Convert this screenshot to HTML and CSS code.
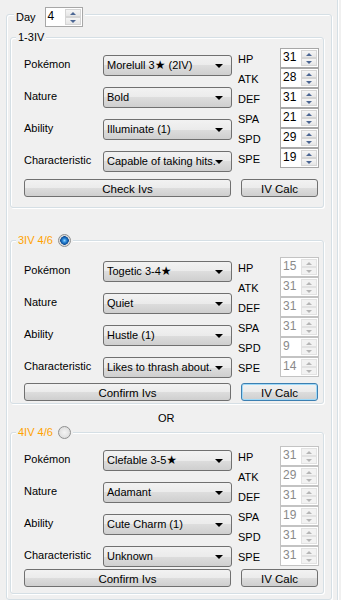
FILE: index.html
```html
<!DOCTYPE html>
<html lang="en">
<head>
  <meta charset="UTF-8" />
  <meta name="viewport" content="width=device-width, initial-scale=1.0" />
  <title>IV Checker</title>
  <link rel="stylesheet" href="styles.css">
</head>
<body>

<div class="window">
  <div class="group day-group">
    <div class="day-title">
      <span>Day</span>
      <div class="spin day-spin">
        <span class="spin-val">4</span>
        <span class="spin-btns"><i class="up"></i><i class="down"></i></span>
      </div>
    </div>

    <!-- 1-3IV -->
    <div class="group iv-group g1">
      <div class="group-title">1-3IV</div>
      <div class="iv-body">
        <div class="fields">
          <div class="field"><span class="lbl">Pokémon</span><div class="combo">Morelull 3<b class="star">★</b> (2IV)</div></div>
          <div class="field"><span class="lbl">Nature</span><div class="combo">Bold</div></div>
          <div class="field"><span class="lbl">Ability</span><div class="combo">Illuminate (1)</div></div>
          <div class="field"><span class="lbl">Characteristic</span><div class="combo">Capable of taking hits.</div></div>
        </div>
        <div class="stats">
          <div class="stat"><span class="lbl">HP</span><div class="spin"><span class="spin-val">31</span><span class="spin-btns"><i class="up"></i><i class="down"></i></span></div></div>
          <div class="stat"><span class="lbl">ATK</span><div class="spin"><span class="spin-val">28</span><span class="spin-btns"><i class="up"></i><i class="down"></i></span></div></div>
          <div class="stat"><span class="lbl">DEF</span><div class="spin"><span class="spin-val">31</span><span class="spin-btns"><i class="up"></i><i class="down"></i></span></div></div>
          <div class="stat"><span class="lbl">SPA</span><div class="spin"><span class="spin-val">21</span><span class="spin-btns"><i class="up"></i><i class="down"></i></span></div></div>
          <div class="stat"><span class="lbl">SPD</span><div class="spin"><span class="spin-val">29</span><span class="spin-btns"><i class="up"></i><i class="down"></i></span></div></div>
          <div class="stat"><span class="lbl">SPE</span><div class="spin"><span class="spin-val">19</span><span class="spin-btns"><i class="up"></i><i class="down"></i></span></div></div>
        </div>
      </div>
      <div class="buttons">
        <button class="btn wide">Check Ivs</button>
        <button class="btn calc">IV Calc</button>
      </div>
    </div>

    <!-- 3IV 4/6 -->
    <div class="group iv-group g2">
      <div class="group-title orange">3IV 4/6 <span class="radio checked"></span></div>
      <div class="iv-body">
        <div class="fields">
          <div class="field"><span class="lbl">Pokémon</span><div class="combo">Togetic 3-4<b class="star">★</b></div></div>
          <div class="field"><span class="lbl">Nature</span><div class="combo">Quiet</div></div>
          <div class="field"><span class="lbl">Ability</span><div class="combo">Hustle (1)</div></div>
          <div class="field"><span class="lbl">Characteristic</span><div class="combo">Likes to thrash about.</div></div>
        </div>
        <div class="stats">
          <div class="stat"><span class="lbl">HP</span><div class="spin off"><span class="spin-val">15</span><span class="spin-btns"><i class="up"></i><i class="down"></i></span></div></div>
          <div class="stat"><span class="lbl">ATK</span><div class="spin off"><span class="spin-val">31</span><span class="spin-btns"><i class="up"></i><i class="down"></i></span></div></div>
          <div class="stat"><span class="lbl">DEF</span><div class="spin off"><span class="spin-val">31</span><span class="spin-btns"><i class="up"></i><i class="down"></i></span></div></div>
          <div class="stat"><span class="lbl">SPA</span><div class="spin off"><span class="spin-val">31</span><span class="spin-btns"><i class="up"></i><i class="down"></i></span></div></div>
          <div class="stat"><span class="lbl">SPD</span><div class="spin off"><span class="spin-val">9</span><span class="spin-btns"><i class="up"></i><i class="down"></i></span></div></div>
          <div class="stat"><span class="lbl">SPE</span><div class="spin off"><span class="spin-val">14</span><span class="spin-btns"><i class="up"></i><i class="down"></i></span></div></div>
        </div>
      </div>
      <div class="buttons">
        <button class="btn wide">Confirm Ivs</button>
        <button class="btn calc focus">IV Calc</button>
      </div>
    </div>

    <div class="or">OR</div>

    <!-- 4IV 4/6 -->
    <div class="group iv-group g3">
      <div class="group-title orange">4IV 4/6 <span class="radio"></span></div>
      <div class="iv-body">
        <div class="fields">
          <div class="field"><span class="lbl">Pokémon</span><div class="combo">Clefable 3-5<b class="star">★</b></div></div>
          <div class="field"><span class="lbl">Nature</span><div class="combo">Adamant</div></div>
          <div class="field"><span class="lbl">Ability</span><div class="combo">Cute Charm (1)</div></div>
          <div class="field"><span class="lbl">Characteristic</span><div class="combo">Unknown</div></div>
        </div>
        <div class="stats">
          <div class="stat"><span class="lbl">HP</span><div class="spin off"><span class="spin-val">31</span><span class="spin-btns"><i class="up"></i><i class="down"></i></span></div></div>
          <div class="stat"><span class="lbl">ATK</span><div class="spin off"><span class="spin-val">29</span><span class="spin-btns"><i class="up"></i><i class="down"></i></span></div></div>
          <div class="stat"><span class="lbl">DEF</span><div class="spin off"><span class="spin-val">31</span><span class="spin-btns"><i class="up"></i><i class="down"></i></span></div></div>
          <div class="stat"><span class="lbl">SPA</span><div class="spin off"><span class="spin-val">19</span><span class="spin-btns"><i class="up"></i><i class="down"></i></span></div></div>
          <div class="stat"><span class="lbl">SPD</span><div class="spin off"><span class="spin-val">31</span><span class="spin-btns"><i class="up"></i><i class="down"></i></span></div></div>
          <div class="stat"><span class="lbl">SPE</span><div class="spin off"><span class="spin-val">31</span><span class="spin-btns"><i class="up"></i><i class="down"></i></span></div></div>
        </div>
      </div>
      <div class="buttons">
        <button class="btn wide">Confirm Ivs</button>
        <button class="btn calc">IV Calc</button>
      </div>
    </div>
  </div>
</div>

</body>
</html>
```

FILE: styles.css
```css
body {
  margin: 0;
  background: #f0f0f0;
  color: #000;
  font-family: 'Liberation Sans', Arial, sans-serif;
  font-size: 11px;
  line-height: 13px;
}
.window {
  width: 338px;
  height: 600px;
  padding: 14px 0 0 6px;
  box-sizing: border-box;
  border-right: 1px solid #d5dfe5;
  box-shadow: 1px 0 0 #fff;
}

/* Group boxes */
.group {
  position: relative;
  border: 1px solid #d5dfe5;
  border-radius: 3px;
  box-shadow: inset 1px 1px 0 #fff, 1px 1px 0 #fff;
}
.day-group {
  width: 326px;
  box-sizing: border-box;
  padding: 0 0 5px 3px;
}
.day-title {
  position: absolute;
  top: -8px;
  left: 7px;
  display: flex;
  align-items: center;
  gap: 9px;
  padding: 0 2px;
  background: #f0f0f0;
}
.group-title {
  position: absolute;
  top: -8px;
  left: 5px;
  display: flex;
  align-items: center;
  gap: 5px;
  padding: 0 2px;
  line-height: 14px;
  background: #f0f0f0;
}
.group-title.orange {
  color: #ffa200;
}
.iv-group {
  width: 314px;
  box-sizing: border-box;
  padding: 0 4px 0 13px;
}
.g1 { margin-top: 22px; padding-bottom: 10px; }
.g2 { margin-top: 32px; padding-bottom: 2px; }
.g3 { padding-bottom: 6px; }

.or {
  height: 28px;
  line-height: 28px;
  padding-left: 148px;
}

/* Radio */
.radio {
  display: inline-block;
  width: 11px;
  height: 11px;
  border: 1px solid #8e8f8f;
  border-radius: 50%;
  background: radial-gradient(circle, #f4f4f4 0, #d6d6d6 100%);
}
.radio.checked {
  background: radial-gradient(circle, #8fd3ff 0, #2b86d6 2px, #0c4c95 4px, #d6d6d6 4.5px, #f4f4f4 100%);
}

/* Fields */
.iv-body {
  display: flex;
  align-items: flex-start;
}
.fields {
  display: flex;
  flex-direction: column;
  gap: 11px;
  width: 208px;
}
.g1 .fields { margin-top: 17px; }
.g2 .fields { margin-top: 20px; }
.g3 .fields { margin-top: 17px; }
.field {
  display: flex;
  align-items: center;
  height: 21px;
}
.field .lbl {
  width: 79px;
  margin-top: -2px;
}
.combo {
  position: relative;
  width: 129px;
  height: 21px;
  box-sizing: border-box;
  padding: 3px 0 0 3px;
  border: 1px solid #707070;
  border-radius: 3px;
  background: linear-gradient(#f2f2f2, #ebebeb 50%, #dddddd 50%, #cfcfcf);
  white-space: nowrap;
  overflow: hidden;
}
.combo::after {
  content: '';
  position: absolute;
  right: 8px;
  top: 8px;
  border-left: 4px solid transparent;
  border-right: 4px solid transparent;
  border-top: 4px solid #000;
}
.star {
  font-family: 'DejaVu Sans', sans-serif;
  font-weight: bold;
  font-size: 12px;
}

/* Stats */
.stats {
  margin-left: 6px;
}
.g1 .stats { margin-top: 10px; }
.g2 .stats { margin-top: 16px; }
.g3 .stats { margin-top: 13px; }
.stat {
  display: flex;
  align-items: center;
  height: 20px;
}
.stat .lbl {
  width: 42px;
  padding-top: 2px;
}
.spin {
  display: flex;
  width: 39px;
  height: 20px;
  box-sizing: border-box;
  border: 1px solid #a7a7a7;
  background: #fff;
}
.spin-val {
  flex: 1;
  padding: 2px 0 0 2px;
  font-size: 12px;
}
.spin-btns {
  display: flex;
  flex-direction: column;
  width: 16px;
  margin: 1px;
}
.spin-btns i {
  flex: 1;
  display: flex;
  align-items: center;
  justify-content: center;
  border: 1px solid #d5d5d5;
  background: linear-gradient(#f5f5f5, #e6e6e6);
}
.spin-btns i::before {
  content: '';
  border-left: 3px solid transparent;
  border-right: 3px solid transparent;
}
.spin-btns .up::before { border-bottom: 3px solid #4c6794; }
.spin-btns .down::before { border-top: 3px solid #4c6794; }
.spin.off { border-color: #c3c3c3; }
.spin.off .spin-val { color: #8a8a8a; }
.spin.off .spin-btns i { border-color: #e2e2e2; background: #f2f2f2; }
.spin.off .up::before { border-bottom-color: #b5b5b5; }
.spin.off .down::before { border-top-color: #b5b5b5; }
.day-spin { width: 38px; }

/* Buttons */
.buttons {
  display: flex;
  gap: 10px;
}
.g1 .buttons { margin-top: 7px; }
.g2 .buttons { margin-top: 5px; }
.g3 .buttons { margin-top: 2px; }
.btn {
  height: 18px;
  padding: 1px 0 0;
  border: 1px solid #707070;
  border-radius: 3px;
  background: linear-gradient(#f2f2f2, #ebebeb 50%, #dddddd 50%, #cfcfcf);
  font-family: inherit;
  font-size: 11.5px;
  line-height: 14px;
  color: #000;
}
.btn.wide { width: 207px; }
.btn.calc { width: 77px; }
.btn.focus {
  border-color: #3c7fb1;
  box-shadow: inset 0 0 0 1px #9fd9f8;
}
```
